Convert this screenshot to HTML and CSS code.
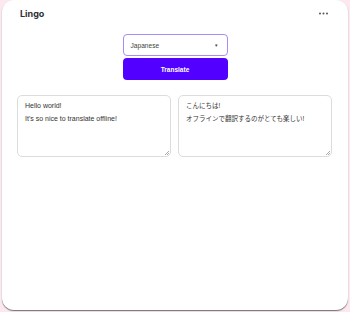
FILE: index.html
```html
<!DOCTYPE html>
<html>
<head>
<meta charset="utf-8">
<link rel="stylesheet" href="styles.css">
</head>
<body>
<div class="window">
  <header class="header">
    <div class="logo">Lingo</div>
    <button class="more" aria-label="More">
      <svg width="9" height="3" viewBox="0 0 9 3"><circle cx="1" cy="1.5" r="1" fill="#555"/><circle cx="4.5" cy="1.5" r="1" fill="#555"/><circle cx="8" cy="1.5" r="1" fill="#555"/></svg>
    </button>
  </header>
  <div class="controls">
    <div class="select">
      <span class="select-label">Japanese</span>
      <span class="caret">▾</span>
    </div>
    <button class="translate">Translate</button>
  </div>
  <div class="panes">
    <div class="pane">
      <p>Hello world!</p>
      <p>It's so nice to translate offline!</p>
      <span class="grip"></span>
    </div>
    <div class="pane pane-ja">
      <p>こんにちは!</p>
      <p>オフラインで翻訳するのがとても楽しい!</p>
      <span class="grip"></span>
    </div>
  </div>
</div>
</body>
</html>
```
FILE: styles.css
```css
html, body {
  margin: 0;
  padding: 0;
  background: #fce8ee;
  width: 350px;
  height: 312px;
  overflow: hidden;
  font-family: "Liberation Sans", Arial, "Noto Sans CJK JP", sans-serif;
}
.window {
  margin: 0 2px;
  height: 310px;
  background: #fff;
  border-radius: 12px;
  box-shadow: 0 1px 1px rgba(60, 60, 70, 0.7);
  display: flex;
  flex-direction: column;
}
.header {
  display: flex;
  justify-content: space-between;
  align-items: center;
  padding: 5px 20px 0 18px;
  height: 16px;
}
.logo {
  font-family: Inter, sans-serif;
  font-size: 9px;
  font-weight: 700;
  color: #2e2e33;
}
.more {
  border: 0;
  background: none;
  padding: 0;
  display: flex;
}
.controls {
  display: flex;
  flex-direction: column;
  align-items: center;
  gap: 2px;
  margin-top: 13px;
}
.select {
  box-sizing: border-box;
  width: 105px;
  height: 22px;
  border: 1px solid #a98cf8;
  border-radius: 4px;
  display: flex;
  align-items: center;
  justify-content: space-between;
  padding: 0 9px 0 7px;
  color: #444;
}
.select-label {
  font-size: 6.6px;
}
.caret {
  font-size: 5px;
  color: #444;
}
.translate {
  box-sizing: border-box;
  width: 105px;
  height: 22px;
  border: 0;
  border-radius: 4px;
  background: #5200ff;
  color: #fff;
  font-family: "Liberation Sans", Arial, sans-serif;
  font-size: 6.5px;
  font-weight: 700;
}
.panes {
  display: flex;
  gap: 7px;
  margin: 15px 16px 0 15px;
}
.pane {
  position: relative;
  box-sizing: border-box;
  flex: 1;
  height: 62px;
  border: 1px solid #dcdcdc;
  border-radius: 5px;
  padding: 6px 7px;
  font-size: 7px;
  color: #333;
}
.pane-ja {
  font-size: 6.5px;
}
.pane p {
  margin: 0 0 5px 0;
  line-height: 8px;
}
.grip {
  position: absolute;
  right: 1px;
  bottom: 1px;
  width: 4px;
  height: 4px;
  background: linear-gradient(135deg, transparent 45%, #aaa 45%, #aaa 55%, transparent 55%, transparent 70%, #aaa 70%, #aaa 80%, transparent 80%);
}
```
